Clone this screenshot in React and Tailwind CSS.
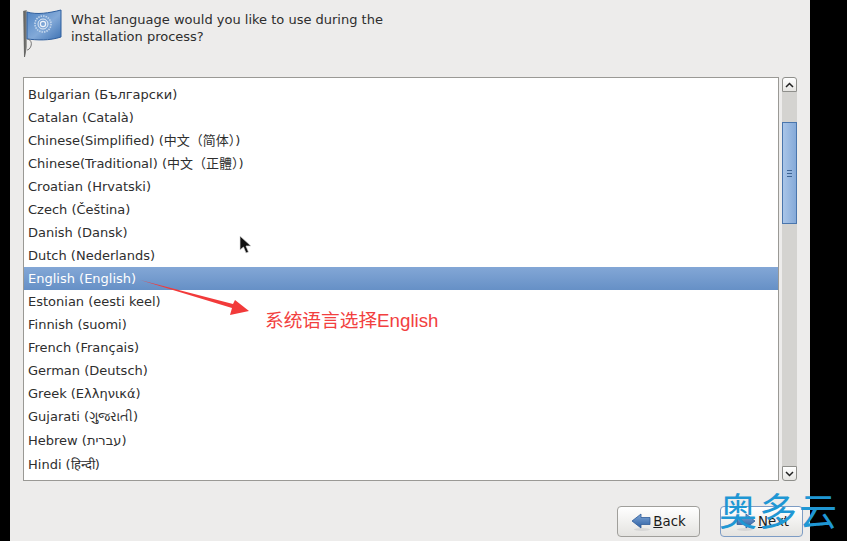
import React from "react";

const languages = [
  "Bulgarian (Български)",
  "Catalan (Català)",
  "Chinese(Simplified) (中文（简体）)",
  "Chinese(Traditional) (中文（正體）)",
  "Croatian (Hrvatski)",
  "Czech (Čeština)",
  "Danish (Dansk)",
  "Dutch (Nederlands)",
  "English (English)",
  "Estonian (eesti keel)",
  "Finnish (suomi)",
  "French (Français)",
  "German (Deutsch)",
  "Greek (Ελληνικά)",
  "Gujarati (ગુજરાતી)",
  "Hebrew (עברית)",
  "Hindi (हिन्दी)",
];

// these two rows come out a pixel taller in the reference
const tallRows = ["Gujarati (ગુજરાતી)", "Hebrew (עברית)"];

const FlagIcon = () => (
  <svg width="40" height="50" viewBox="0 0 40 50" className="shrink-0">
    <defs>
      <linearGradient id="pole" x1="0" x2="1" y1="0" y2="0">
        <stop offset="0" stopColor="#8a8a88" />
        <stop offset="0.5" stopColor="#5c5c5a" />
        <stop offset="1" stopColor="#b5b5b2" />
      </linearGradient>
      <linearGradient id="cloth" x1="0" x2="1" y1="0" y2="1">
        <stop offset="0" stopColor="#4f83c2" />
        <stop offset="0.55" stopColor="#82a9d8" />
        <stop offset="1" stopColor="#3e72b3" />
      </linearGradient>
    </defs>
    <path d="M0 2 L4 1 L4 38 L2 48 L1 48 Z" fill="url(#pole)" />
    <path d="M4 3 C14 6 26 4 38 1 L38 28 C26 32 14 31 4 30 Z" fill="url(#cloth)" stroke="#2f5f9e" strokeWidth="1" />
    <circle cx="20" cy="15" r="8" fill="none" stroke="#c3d6ec" strokeWidth="1.6" strokeDasharray="1.5 1" />
    <circle cx="20" cy="15" r="5" fill="none" stroke="#dfe9f5" strokeWidth="1" />
    <circle cx="20" cy="15" r="2.6" fill="none" stroke="#eef3fa" strokeWidth="1.2" />
    <path d="M5 30 C8 31 9 34 8 37 C7 40 5 41 4 41" fill="none" stroke="#777" strokeWidth="1" />
  </svg>
);

const ArrowLeftIcon = () => (
  <svg width="20" height="20" viewBox="0 0 20 20">
    <defs>
      <linearGradient id="arrowBlue" x1="0" x2="0" y1="0" y2="1">
        <stop offset="0" stopColor="#7ea6d6" />
        <stop offset="1" stopColor="#2d5fa3" />
      </linearGradient>
    </defs>
    <ellipse cx="11" cy="17.5" rx="8" ry="1.5" fill="#d6d6d6" />
    <path d="M1 9 L10 2 L10 5.5 L19 5.5 L19 12.5 L10 12.5 L10 16 Z" fill="url(#arrowBlue)" stroke="#2f5c99" strokeWidth="0.8" />
  </svg>
);

const ArrowRightIcon = () => (
  <svg width="20" height="20" viewBox="0 0 20 20">
    <ellipse cx="9" cy="17.5" rx="8" ry="1.5" fill="#d6d6d6" />
    <path d="M19 9 L10 2 L10 5.5 L1 5.5 L1 12.5 L10 12.5 L10 16 Z" fill="url(#arrowBlue)" stroke="#2f5c99" strokeWidth="0.8" />
  </svg>
);

const ScrollButton = ({ up }) => (
  <div
    className={`h-[15px] border border-[#8f8f8b] bg-gradient-to-b from-white to-[#e6e5e2] flex items-center justify-center ${
      up ? "rounded-t-[3px]" : "rounded-b-[3px]"
    }`}
  >
    <svg width="9" height="6" viewBox="0 0 9 6">
      <path d={up ? "M1 5 L4.5 1.5 L8 5" : "M1 1 L4.5 4.5 L8 1"} fill="none" stroke="#222" strokeWidth="1.5" />
    </svg>
  </div>
);

const Scrollbar = () => (
  <div className="w-[15px] h-[404px] flex flex-col">
    <ScrollButton up />
    <div className="flex-1 bg-[#d4d3d0] flex flex-col">
      <div className="h-[30px]" />
      <div className="h-[102px] border border-[#4a76ad] bg-gradient-to-r from-[#a9c5e8] to-[#86aad8] flex flex-col items-center justify-center gap-[2px]">
        <div className="w-[5px] h-px bg-[#3f6594]" />
        <div className="w-[5px] h-px bg-[#3f6594]" />
        <div className="w-[5px] h-px bg-[#3f6594]" />
      </div>
    </div>
    <ScrollButton />
  </div>
);

const NavButton = ({ focused, children }) => (
  <button
    className={`w-[83px] h-[31px] rounded-[4px] border bg-gradient-to-b from-white to-[#e4e3e0] flex items-center justify-center gap-[2px] text-[13.33px] text-[#1a1a1a] ${
      focused ? "border-[#7d9cc4] pl-[2px]" : "border-[#a09f9b]"
    }`}
  >
    {children}
  </button>
);

export default function App() {
  return (
    <div className="w-[847px] h-[541px] overflow-hidden bg-black pl-[10px] pr-[37px] relative font-['DejaVu_Sans','Noto_Sans_CJK_SC',sans-serif] text-[13px] text-[#2e2e2e]">
      <div className="w-[800px] h-[541px] bg-[#edeceb] flex flex-col pl-[13px] pr-[7px]">
        <div className="h-[77px] flex items-start gap-[8px] pt-[9px]">
          <FlagIcon />
          <p className="leading-[17px] pt-[2px]">
            What language would you like to use during the
            <br />
            installation process?
          </p>
        </div>

        <div className="flex gap-[3px]">
          <div className="w-[756px] h-[404px] border border-[#9a9995] bg-white pt-[5px] overflow-hidden">
            {languages.map((lang) => (
              <div
                key={lang}
                className={`leading-[23px] px-1 whitespace-nowrap ${
                  tallRows.includes(lang) ? "h-[24px]" : "h-[23px]"
                } ${
                  lang.startsWith("English")
                    ? "bg-gradient-to-b from-[#83a7d6] to-[#6690c6] text-white"
                    : ""
                }`}
              >
                {lang}
              </div>
            ))}
          </div>
          <Scrollbar />
        </div>

        <div className="flex justify-end gap-[20px] pt-[25px]">
          <NavButton>
            <ArrowLeftIcon />
            <span>
              <u>B</u>ack
            </span>
          </NavButton>
          <NavButton focused>
            <ArrowRightIcon />
            <span>
              <u>N</u>ext
            </span>
          </NavButton>
        </div>
      </div>

      {/* annotations pasted on top of the screenshot */}
      <svg width="120" height="45" viewBox="0 0 120 45" className="absolute left-[135px] top-[275px]">
        <path d="M5 5 L98 29 L100 25 L114 36 L95 40 L97 33 Z" fill="#f23a3a" />
      </svg>
      <span className="absolute left-[265px] top-[309px] text-[18.7px] leading-[24px] text-[#f24040] whitespace-nowrap font-['Liberation_Sans','Noto_Sans_CJK_SC',sans-serif]">
        系统语言选择English
      </span>
      <svg width="14" height="20" viewBox="0 0 14 20" className="absolute left-[239px] top-[235px]">
        <path d="M1 1 L1 15 L4.5 12 L7 18 L9.5 17 L7 11 L12 11 Z" fill="#111" stroke="#ddd" strokeWidth="0.7" />
      </svg>
      <span className="absolute left-[719px] top-[486px] text-[38px] leading-[46px] tracking-[2px] text-[#1f97d4] whitespace-nowrap font-['Noto_Sans_CJK_SC',sans-serif]">
        奥多云
      </span>
    </div>
  );
}
